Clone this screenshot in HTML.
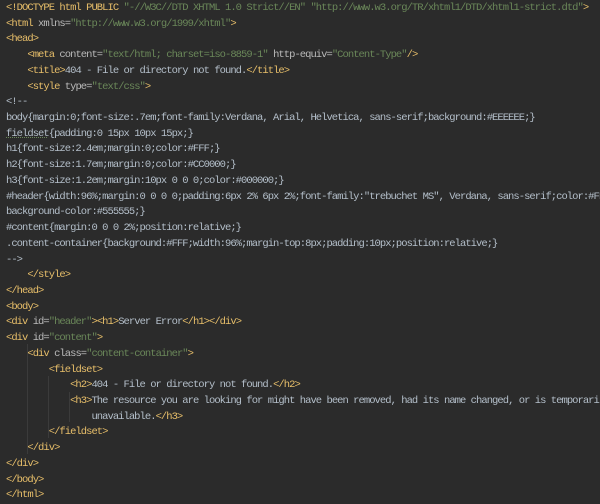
<!DOCTYPE html>
<html><head><style>
body{margin:0;background:#2b2b2b;width:600px;height:503px;overflow:hidden;position:relative}
pre{margin:0;position:absolute;left:6px;top:1px;font-family:"Liberation Mono",monospace;font-size:10.5px;letter-spacing:-0.96px;line-height:15.72px;color:#b4bfca;white-space:pre}
.t{color:#e8bf6a}.a{color:#bababa}.s{color:#6a8759}.u{text-decoration:underline dotted #6a8759;text-decoration-thickness:1px}
.g{position:absolute;width:1px;background:#3b3b3b}
</style></head><body>
<div class="g" style="left:27px;top:344px;height:110px"></div>
<div class="g" style="left:48px;top:376px;height:62px"></div>
<div class="g" style="left:69px;top:392px;height:30px"></div>
<pre><span class="t">&lt;!DOCTYPE html PUBLIC </span><span class="s">"-//W3C//DTD XHTML 1.0 Strict//EN" "http://www.w3.org/TR/xhtml1/DTD/xhtml1-strict.dtd"</span><span class="t">&gt;</span>
<span class="t">&lt;html </span><span class="a">xmlns=</span><span class="s">"http://www.w3.org/1999/xhtml"</span><span class="t">&gt;</span>
<span class="t">&lt;head&gt;</span>
    <span class="t">&lt;meta </span><span class="a">content=</span><span class="s">"text/html; charset=iso-8859-1"</span> <span class="a">http-equiv=</span><span class="s">"Content-Type"</span><span class="t">/&gt;</span>
    <span class="t">&lt;title&gt;</span>404 - File or directory not found.<span class="t">&lt;/title&gt;</span>
    <span class="t">&lt;style </span><span class="a">type=</span><span class="s">"text/css"</span><span class="t">&gt;</span>
&lt;!--
body{margin:0;font-size:.7em;font-family:Verdana, Arial, Helvetica, sans-serif;background:#EEEEEE;}
<span class="u">fieldset</span>{padding:0 15px 10px 15px;}
h1{font-size:2.4em;margin:0;color:#FFF;}
h2{font-size:1.7em;margin:0;color:#CC0000;}
h3{font-size:1.2em;margin:10px 0 0 0;color:#000000;}
#header{width:96%;margin:0 0 0 0;padding:6px 2% 6px 2%;font-family:"trebuchet MS", Verdana, sans-serif;color:#FFF;
background-color:#555555;}
#content{margin:0 0 0 2%;position:relative;}
.content-container{background:#FFF;width:96%;margin-top:8px;padding:10px;position:relative;}
--&gt;
    <span class="t">&lt;/style&gt;</span>
<span class="t">&lt;/head&gt;</span>
<span class="t">&lt;body&gt;</span>
<span class="t">&lt;div </span><span class="a">id=</span><span class="s">"header"</span><span class="t">&gt;&lt;h1&gt;</span>Server Error<span class="t">&lt;/h1&gt;&lt;/div&gt;</span>
<span class="t">&lt;div </span><span class="a">id=</span><span class="s">"content"</span><span class="t">&gt;</span>
    <span class="t">&lt;div </span><span class="a">class=</span><span class="s">"content-container"</span><span class="t">&gt;</span>
        <span class="t">&lt;fieldset&gt;</span>
            <span class="t">&lt;h2&gt;</span>404 - File or directory not found.<span class="t">&lt;/h2&gt;</span>
            <span class="t">&lt;h3&gt;</span>The resource you are looking for might have been removed, had its name changed, or is temporarily
                unavailable.<span class="t">&lt;/h3&gt;</span>
        <span class="t">&lt;/fieldset&gt;</span>
    <span class="t">&lt;/div&gt;</span>
<span class="t">&lt;/div&gt;</span>
<span class="t">&lt;/body&gt;</span>
<span class="t">&lt;/html&gt;</span></pre>
</body></html>
